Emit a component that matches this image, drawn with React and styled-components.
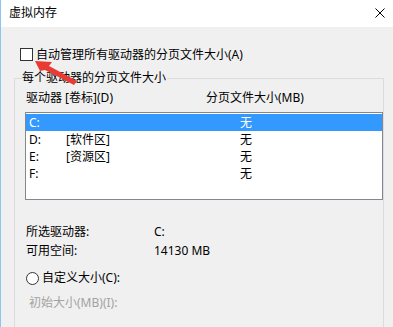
import React from 'react';
import styled, { createGlobalStyle } from 'styled-components';

const Global = createGlobalStyle`
  html, body {
    margin: 0;
    padding: 0;
    background: #f0f0f0;
  }
  body {
    font-family: "Noto Sans", "Noto Sans CJK SC", sans-serif;
    font-size: 12px;
    color: #000;
  }
`;

const Window = styled.div`
  position: relative;
  width: 393px;
  height: 327px;
  overflow: hidden;
  box-sizing: border-box;
  border-left: 1px solid #8ec5ee;
  background: #f0f0f0;
`;

const TitleBar = styled.div`
  height: 27px;
  background: #ffffff;
  display: flex;
  align-items: center;
  justify-content: space-between;
  padding: 0 8px 2px 8px;
  box-sizing: border-box;
`;

const Title = styled.span`
  font-size: 12px;
  line-height: 16px;
`;

const Close = styled.svg`
  width: 10px;
  height: 10px;
  margin-top: 1px;
`;

const Body = styled.div`
  padding: 21px 0 0 19px;
`;

const CheckRow = styled.label`
  display: flex;
  align-items: center;
  gap: 3px;
  height: 13px;
`;

const Box = styled.span`
  width: 13px;
  height: 13px;
  box-sizing: border-box;
  border: 1px solid #333333;
  background: #ffffff;
`;

const Text = styled.span`
  line-height: 16px;
  white-space: nowrap;
  color: ${p => (p.$disabled ? '#a2a2a2' : '#000')};
`;

const Group = styled.fieldset`
  margin: 9px 0 0 -6px;
  padding: 4px 0 0 11px;
  width: 368px;
  height: 280px;
  box-sizing: border-box;
  border: 1px solid #dcdcdc;
`;

const Legend = styled.legend`
  margin-left: -4px;
  padding: 0 1px 0 0;
  line-height: 16px;
  font-size: 12px;
`;

const Header = styled.div`
  display: grid;
  grid-template-columns: 180px auto;
  line-height: 16px;
`;

const ListBox = styled.div`
  margin: 6px 0 0 -1px;
  width: 358px;
  height: 88px;
  box-sizing: border-box;
  border: 1px solid #828790;
  background: #ffffff;
  padding: 1px 0;
`;

const Row = styled.div`
  display: grid;
  grid-template-columns: 37px 174px 1fr;
  height: 17px;
  align-items: center;
  padding-left: 3px;
  line-height: 17px;
  background: ${p => (p.$selected ? '#3399ff' : 'transparent')};
  color: ${p => (p.$selected ? '#ffffff' : '#000')};
`;

const Info = styled.div`
  display: grid;
  grid-template-columns: 128px auto;
  row-gap: 3px;
  margin-top: 24px;
  line-height: 16px;
`;

const RadioRow = styled.label`
  display: flex;
  align-items: center;
  gap: 3px;
  margin-top: 11px;
  height: 16px;
`;

const Radio = styled.span`
  width: 13px;
  height: 13px;
  box-sizing: border-box;
  border: 1px solid #333333;
  border-radius: 50%;
  background: #ffffff;
`;

const Indented = styled.div`
  margin: 8px 0 0 3px;
`;

// red annotation arrow drawn over the dialog
const Arrow = styled.svg`
  position: absolute;
  left: 0;
  top: 0;
  pointer-events: none;
`;

const drives = [
  { d: 'C:', label: '', size: '无', selected: true },
  { d: 'D:', label: '[软件区]', size: '无' },
  { d: 'E:', label: '[资源区]', size: '无' },
  { d: 'F:', label: '', size: '无' },
];

export default function App() {
  return (
    <>
      <Global />
      <Window>
        <TitleBar>
          <Title>虚拟内存</Title>
          <Close viewBox="0 0 10 10">
            <path d="M0.5 0.5 L9.5 9.5 M9.5 0.5 L0.5 9.5" stroke="#000" strokeWidth="1" />
          </Close>
        </TitleBar>
        <Body>
          <CheckRow>
            <Box />
            <Text>自动管理所有驱动器的分页文件大小(A)</Text>
          </CheckRow>
          <Group>
            <Legend>每个驱动器的分页文件大小</Legend>
            <Header>
              <Text>驱动器 [卷标](D)</Text>
              <Text>分页文件大小(MB)</Text>
            </Header>
            <ListBox>
              {drives.map(r => (
                <Row key={r.d} $selected={r.selected}>
                  <span>{r.d}</span>
                  <span>{r.label}</span>
                  <span>{r.size}</span>
                </Row>
              ))}
            </ListBox>
            <Info>
              <Text>所选驱动器:</Text>
              <Text>C:</Text>
              <Text>可用空间:</Text>
              <Text>14130 MB</Text>
            </Info>
            <RadioRow>
              <Radio />
              <Text>自定义大小(C):</Text>
            </RadioRow>
            <Indented>
              <Text $disabled>初始大小(MB)(I):</Text>
            </Indented>
          </Group>
        </Body>
        <Arrow width="393" height="327" viewBox="0 0 393 327">
          <polygon
            points="34,61 51,62 48,66 76,81 73,85 44,70 39,71"
            fill="#ea3b33"
          />
        </Arrow>
      </Window>
    </>
  );
}
